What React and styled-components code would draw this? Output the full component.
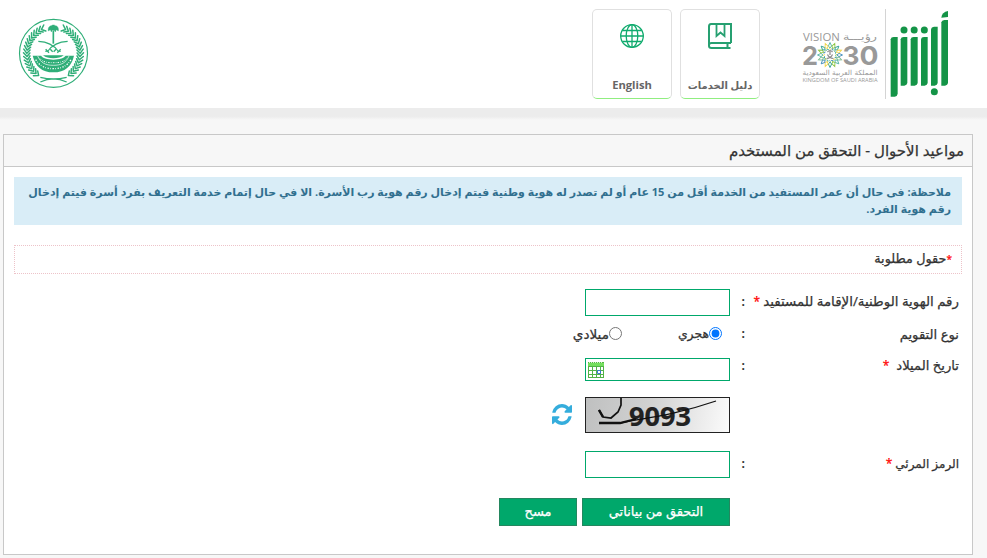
import React from 'react';

import styled, { createGlobalStyle } from 'styled-components';

const GREEN = '#00a86b';
const EMBLEM_GREEN = '#2fae78';

const GlobalStyle = createGlobalStyle`
  * {
    box-sizing: border-box;
  }

  body {
    margin: 0;
    height: 558px;
    overflow: hidden;
    background: #f7f7f7;
    color: #333;
    font-family: 'Open Sans', 'DejaVu Sans', sans-serif;
    font-size: 12px;
  }
`;

const Header = styled.header`
  display: flex;
  align-items: flex-start;
  height: 108px;
  padding: 9px 38px 0 18px;
  background: #fff;
`;

const HeaderShade = styled.div`
  height: 12px;
  background: linear-gradient(#ececec 70%, #f7f7f7);
`;

const Brand = styled.div`
  display: flex;
  gap: 4px;
`;

const BrandDivider = styled.span`
  width: 1px;
  height: 90px;
  background: #d4d4d4;
`;

const Cards = styled.nav`
  display: flex;
  gap: 8px;
  margin-right: 41px;
`;

const Card = styled.a`
  display: flex;
  flex-direction: column;
  align-items: center;
  justify-content: space-between;
  width: 80px;
  height: 90px;
  padding: 13px 0 5px;
  border: 1px solid #e0e0e0;
  border-bottom-color: #90ee80;
  border-radius: 5px;
  color: #666;
  font-size: ${({ $size }) => $size}px;
  font-weight: 700;
  line-height: 16px;
  white-space: nowrap;
`;

const EmblemSlot = styled.div`
  margin: 9px auto 0 0;
  height: 72px;
`;

const Panel = styled.main`
  width: 970px;
  height: 421px;
  margin: 14px 14px 0 0;
  border: 1px solid #c8c8c8;
  background: #fff;
`;

const PanelTitle = styled.h1`
  height: 32px;
  margin: 0;
  padding-right: 8px;
  border-bottom: 1px solid #c8c8c8;
  background: #f7f7f7;
  font-size: 15px;
  font-weight: 400;
  line-height: 30px;
  -webkit-text-stroke: 0.25px;
`;

const Notice = styled.div`
  height: 48px;
  margin: 10px 10px 0;
  padding: 6px 11px;
  background: #d9edf7;
  color: #31708f;
  font-size: 11px;
  font-weight: 700;
  line-height: 17px;
`;

const NoticeLine = styled.div`
  white-space: nowrap;
`;

const RequiredBox = styled.div`
  height: 29px;
  margin: 20px 10px 0;
  padding-right: 9px;
  border: 1px dotted #edc3c9;
  font-size: 12.8px;
  line-height: 25px;
  -webkit-text-stroke: 0.25px;
`;

const Star = styled.span`
  color: #f00;
  font-size: ${({ $size = 12 }) => $size}px;
  line-height: 1;
  margin-right: ${({ $gap = 3 }) => $gap}px;
`;

const Form = styled.form`
  padding-right: 13px;
`;

const Row = styled.div`
  display: grid;
  grid-template-columns: 211px 18px 1fr;
  height: ${({ $height }) => $height}px;
  margin-top: ${({ $top }) => $top}px;
`;

const Label = styled.label`
  font-size: ${({ $size = 13.2 }) => $size}px;
  line-height: ${({ $line }) => $line}px;
  white-space: nowrap;
  -webkit-text-stroke: 0.25px;
`;

const Colon = styled.span`
  padding-right: 3px;
  font-weight: 700;
  line-height: ${({ $line }) => $line}px;
`;

const Field = styled.div`
  display: flex;
  grid-column: 3;
`;

const RadioGroup = styled(Field)`
  padding-right: 8px;
`;

const TextInput = styled.input`
  width: 145px;
  height: 100%;
  padding: 2px 4px;
  border: 1px solid ${GREEN};
  background: #fff;
  outline: none;
`;

const DateBox = styled.div`
  display: flex;
  align-items: center;
  justify-content: flex-end;
  width: 145px;
  padding-left: 2px;
  border: 1px solid ${GREEN};
`;

const Radio = styled.label`
  display: flex;
  align-items: center;
  width: ${({ $width }) => $width}px;
  font-size: ${({ $size }) => $size}px;
  line-height: 18px;
  white-space: nowrap;
  -webkit-text-stroke: 0.25px;

  input {
    flex: none;
    width: 13px;
    height: 13px;
    margin: 0 0 1px;
  }
`;

const CaptchaBox = styled.div`
  width: 145px;
  height: 36px;
  border: 1px solid #222;
  background: linear-gradient(100deg, #bfc0c0, #d2d2d2 45%, #fbfbfb);
`;

const RefreshSlot = styled.div`
  margin: 7px 13px 0 0;
`;

const Button = styled.button`
  width: ${({ $width }) => $width}px;
  height: 28px;
  margin-left: 5px;
  padding: 0 0 2px;
  border: 1px solid #24875f;
  background: ${GREEN};
  color: #fff;
  font-family: inherit;
  font-size: 13px;
  -webkit-text-stroke: 0.25px;
`;

const Svg = styled.svg`
  display: block;
`;

const polar = (r, deg) => {
  const a = (deg * Math.PI) / 180;
  return [160.5 + r * Math.sin(a), 161 - r * Math.cos(a)];
};

// Leaves of one branch, from the tip near the top down to the stem
const leaves = (side) => {
  const parts = [];
  for (let deg = 27; deg <= 152; deg += 7) {
    const [x, y] = polar(80, side * deg);
    [71, 90].forEach((r) => {
      const [tx, ty] = polar(r, side * (deg - 8));
      parts.push(`M${x.toFixed(1)} ${y.toFixed(1)}L${tx.toFixed(1)} ${ty.toFixed(1)}`);
    });
  }
  return parts.join('');
};

const Emblem = () => (
  <Svg width="71" height="71" viewBox="54 55 213 213" fill="none" stroke={EMBLEM_GREEN}>
    <circle cx="160.5" cy="161" r="102" strokeWidth="3.5" />
    <path d={leaves(1)} strokeWidth="4.5" strokeLinecap="round" />
    <path d={leaves(-1)} strokeWidth="4.5" strokeLinecap="round" />
    <path d="M121 247 Q160 228 200 247M121 233 Q160 243 200 233" strokeWidth="4" />
    <path d="M160 92v40" strokeWidth="5" />
    <path
      d="M145 94c-2-9 3-16 9-16 2-3 10-3 12 0 7 0 11 8 9 16l-6-4-3 7-4-6h-5l-3 6-3-7Z"
      fill={EMBLEM_GREEN}
      strokeWidth="1"
    />
    <path d="M115 125c22 1 45 9 59 29l8 1M203 125c-22 1-45 9-59 29l-8 1" strokeWidth="3.5" />
    <path d="M137 149l10 10M182 149l-10 10M151 149l7 7M168 149l-7 7" strokeWidth="4" />
    <path d="M98 168H222C215 200 195 218 160 218S106 200 98 168Z" fill={EMBLEM_GREEN} stroke="none" />
    <path d="M122 167h76c-6 9-19 13-38 13s-32-4-38-13Z" fill="#fff" stroke="none" />
    <path d="M129 167h62c-8 7-18 9-31 9s-23-2-31-9Z" fill={EMBLEM_GREEN} stroke="none" />
    <path d="M113 169c9 21 24 28 47 28s38-7 47-28" stroke="#fff" strokeWidth="2" />
    <path d="M107 180c12 19 28 27 53 27s41-8 53-27" stroke="#fff" strokeWidth="4" strokeDasharray="4 4 2 5" />
    <path d="M120 177c9 10 20 12 40 12s31-2 40-12" stroke="#fff" strokeWidth="3" strokeDasharray="4 4 2 4" />
  </Svg>
);

const AbsherLogo = () => (
  <Svg width="59" height="88" viewBox="301 28 177 264" fill="#149447">
    <path d="M303 119q1-7 9-7H324V282q-1 8-9 9H303Z" />
    <path d="M333 119q1-7 9-7H353V250q-1 7-9 8H333Z" />
    <path d="M363 119q1-7 9-7H384V250q-1 7-9 8H363Z" />
    <path d="M394 119q1-7 9-7H414V250q-1 7-9 8H394Z" />
    <path d="M424 89q1-7 9-8H444V250q-1 7-9 8H424Z" />
    <path d="M455 68q1-6 9-7H475V250q-1 7-9 8H455Z" />
    <path d="M455 54q2-17 20-20V52Z" />
    <circle cx="343" cy="91" r="10.5" />
    <circle cx="373.5" cy="91" r="10.5" />
    <circle cx="404" cy="91" r="10.5" />
    <circle cx="434" cy="276" r="10.5" />
  </Svg>
);

const PETALS = ['#4fb3a5', '#8dc63f', '#2a9d8f', '#f2d54a', '#3c88b8', '#79b98c'];

const VisionLogo = () => (
  <Svg width="80" height="90" viewBox="0 0 80 90" fill="#999" direction="ltr">
    <text x="2" y="31.5" fontFamily="Open Sans" fontSize="10.5" textLength="37" lengthAdjust="spacingAndGlyphs">
      VISION
    </text>
    <text x="76" y="31" direction="rtl" fontFamily="DejaVu Sans" fontSize="10" textLength="34" lengthAdjust="spacingAndGlyphs">
      رؤيـــة
    </text>
    <g fontFamily="Inter" fontSize="26" fontWeight="700">
      <text x="1" y="56" textLength="16" lengthAdjust="spacingAndGlyphs">2</text>
      <text x="41.5" y="56" textLength="17" lengthAdjust="spacingAndGlyphs">3</text>
      <text x="58.5" y="56" textLength="19" lengthAdjust="spacingAndGlyphs">0</text>
    </g>
    <g transform="translate(29 46)">
      {Array.from({ length: 16 }, (_, i) => (
        <g key={i} transform={`rotate(${i * 22.5})`} strokeWidth=".9" fill="none">
          <path d="M0-7l-1.6-2L0-12.5L1.6-9Z" stroke={PETALS[i % 6]} />
          <path d="M-1-6.5l2 1" stroke={PETALS[(i + 3) % 6]} />
        </g>
      ))}
      <path d="M0-4v4M-2.5-3q2.5-3 5 0M-3.5 3.5Q1 3 2.5-.5M3.5 3.5Q-1 3-2.5-.5" fill="none" stroke="#888" strokeWidth="1.2" />
    </g>
    <text x="76.5" y="66" direction="rtl" fontFamily="DejaVu Sans" fontSize="7" textLength="75" lengthAdjust="spacingAndGlyphs">
      المملكة العربية السعودية
    </text>
    <text x="1.5" y="72.5" fontFamily="Open Sans" fontSize="5.8" textLength="75" lengthAdjust="spacingAndGlyphs">
      KINGDOM OF SAUDI ARABIA
    </text>
  </Svg>
);

const BookIcon = () => (
  <Svg width="26" height="27" viewBox="0 0 26 27" fill="none" stroke="#26a071" strokeWidth="2">
    <path d="M24 20V1H4Q2 1 2 3.5V23q0 2 2.5 2H23.5M2 22q0-2 2.5-2H24M20.5 20v5" />
    <path d="M9.5 1v12l4-3.5 4 3.5V1" strokeWidth="1.8" />
  </Svg>
);

const GlobeIcon = () => (
  <Svg width="26" height="26" viewBox="0 0 26 26" fill="none" stroke="#10ab6e" strokeWidth="1.3">
    <circle cx="13" cy="13" r="11.3" />
    <ellipse cx="13" cy="13" rx="5.8" ry="11.3" />
    <path d="M13 1.5v23M1.5 13h23M3.5 7.5h19M3.5 18.5h19" />
  </Svg>
);

const CalendarIcon = () => (
  <Svg width="16" height="16" viewBox="0 0 16 16">
    <path fill="#52b347" d="M0 0h16v16H0z" />
    <path fill="#74df5d" d="M0 1h16v3H0z" />
    <path stroke="#d8f8c8" strokeDasharray="1 1" d="M1 .5h14" />
    <path fill="#fff" d="M1 5h14v10H1z" />
    <path fill="#52b347" d="M4 5h1v10H4zM8 5h1v10H8zM12 5h1v10h-1zM1 8h14v1H1zM1 12h14v1H1z" />
    <path fill="none" stroke="#3a78d0" d="M9.5 8.5h3v3h-3z" />
  </Svg>
);

const RefreshIcon = () => (
  <Svg width="20" height="21" viewBox="0 0 1536 1536" preserveAspectRatio="none" fill="#35addc">
    <path d="M1511 928q0 5-1 7-64 268-268 434.500T764 1536q-146 0-282.500-55T238 1324l-129 129q-19 19-45 19t-45-19-19-45V960q0-26 19-45t45-19h448q26 0 45 19t19 45-19 45l-137 137q71 66 161 102t187 36q134 0 250-65t186-179q11-17 53-117 8-23 30-23h192q13 0 22.500 9.500t9.500 22.500zm25-800v448q0 26-19 45t-45 19h-448q-26 0-45-19t-19-45 19-45l138-138Q969 256 768 256q-134 0-250 65T332 500q-11 17-53 117-8 23-30 23H50q-13 0-22.500-9.500T18 608v-7q65-268 270-434.500T768 0q146 0 284 55.500T1297 212l130-129q19-19 45-19t45 19 19 45z" />
  </Svg>
);

const Captcha = () => (
  <Svg width="143" height="34" viewBox="0 0 143 34" fill="none" stroke="#111">
    <text
      x="43"
      y="28"
      direction="ltr"
      fill="#222"
      strokeWidth=".2"
      fontFamily="Open Sans"
      fontSize="27"
      fontWeight="700"
      textLength="62"
      lengthAdjust="spacingAndGlyphs"
    >
      9093
    </text>
    <path d="M13 12l4 7 8 1 7-6 3-7V0" strokeWidth="1.7" />
    <path d="M13 12l4 7" strokeWidth="2.5" />
    <path d="M13 25h21L50 21" strokeWidth="2.3" />
    <path d="M34 25C58 20 86 18 130 3" strokeWidth="1.3" />
  </Svg>
);

const App = () => (
  <div dir="rtl" lang="ar">
    <GlobalStyle />
    <Header>
      <Brand>
        <AbsherLogo />
        <BrandDivider />
        <VisionLogo />
      </Brand>
      <Cards>
        <Card $size={10}>
          <BookIcon />
          دليل الخدمات
        </Card>
        <Card $size={11.2}>
          <GlobeIcon />
          English
        </Card>
      </Cards>
      <EmblemSlot>
        <Emblem />
      </EmblemSlot>
    </Header>
    <HeaderShade />
    <Panel>
      <PanelTitle>مواعيد الأحوال - التحقق من المستخدم</PanelTitle>
      <Notice>
        <NoticeLine>
          ملاحظة: فى حال أن عمر المستفيد من الخدمة أقل من 15 عام أو لم تصدر له هوية وطنية فيتم إدخال رقم هوية رب الأسرة. الا
          في حال إتمام خدمة التعريف بفرد أسرة فيتم إدخال
        </NoticeLine>
        <NoticeLine>رقم هوية الفرد.</NoticeLine>
      </Notice>
      <RequiredBox>
        <Star $gap={0} $size={10}>
          *
        </Star>
        حقول مطلوبة
      </RequiredBox>
      <Form>
        <Row $height={27} $top={15}>
          <Label $line={25} $size={13.4}>
            رقم الهوية الوطنية/الإقامة للمستفيد<Star>*</Star>
          </Label>
          <Colon $line={25}>:</Colon>
          <Field>
            <TextInput />
          </Field>
        </Row>
        <Row $height={18} $top={9}>
          <Label $line={18}>نوع التقويم</Label>
          <Colon $line={18}>:</Colon>
          <RadioGroup>
            <Radio $width={100} $size={12.4}>
              <input type="radio" name="calendar" defaultChecked />
              هجري
            </Radio>
            <Radio $width={60} $size={13.6}>
              <input type="radio" name="calendar" />
              ميلادي
            </Radio>
          </RadioGroup>
        </Row>
        <Row $height={23} $top={15}>
          <Label $line={15}>
            تاريخ الميلاد<Star $gap={7}>*</Star>
          </Label>
          <Colon $line={16}>:</Colon>
          <Field>
            <DateBox>
              <CalendarIcon />
            </DateBox>
          </Field>
        </Row>
        <Row $height={36} $top={16}>
          <Field>
            <CaptchaBox>
              <Captcha />
            </CaptchaBox>
            <RefreshSlot>
              <RefreshIcon />
            </RefreshSlot>
          </Field>
        </Row>
        <Row $height={27} $top={18}>
          <Label $line={25} $size={12}>
            الرمز المرئي<Star>*</Star>
          </Label>
          <Colon $line={25}>:</Colon>
          <Field>
            <TextInput />
          </Field>
        </Row>
        <Row $height={28} $top={20}>
          <Field>
            <Button type="button" $width={148}>
              التحقق من بياناتي
            </Button>
            <Button type="button" $width={78}>
              مسح
            </Button>
          </Field>
        </Row>
      </Form>
    </Panel>
  </div>
);

export default App;
